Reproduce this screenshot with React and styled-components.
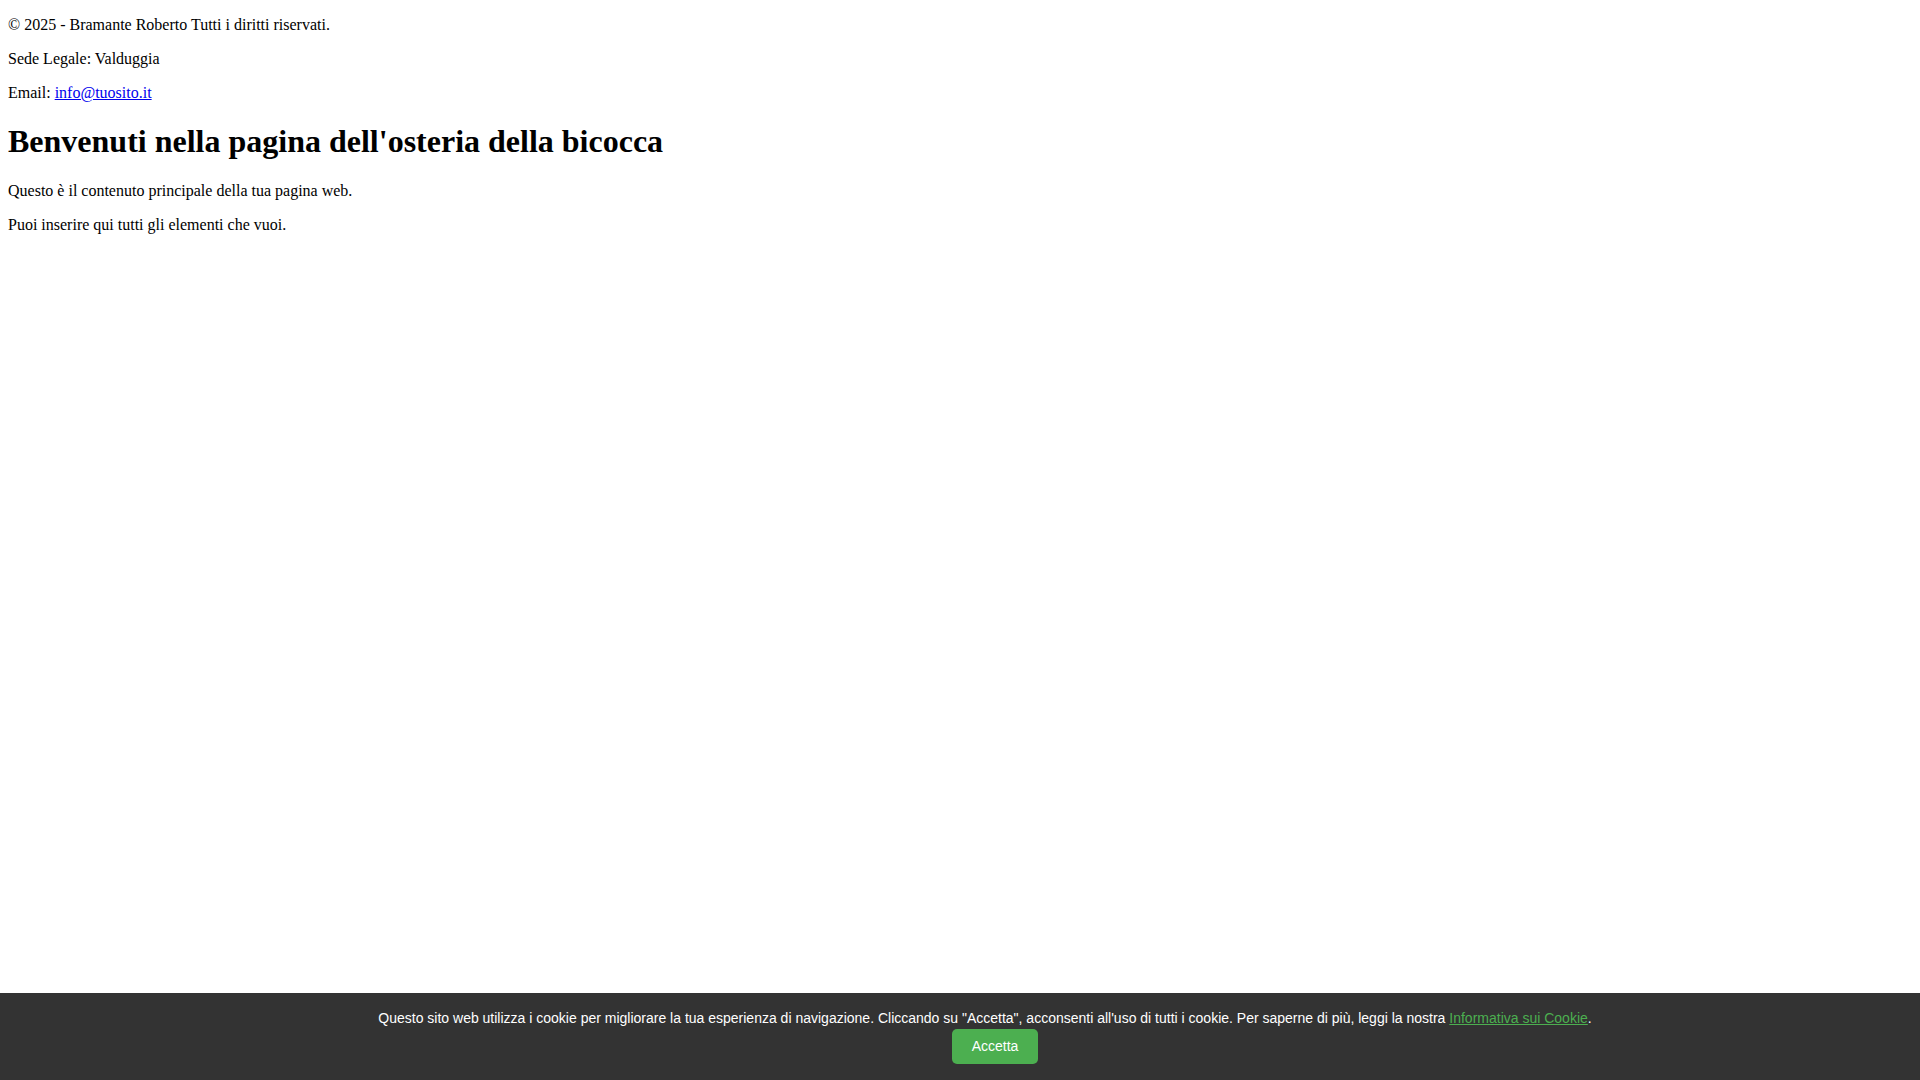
import React from "react"
import styled, { createGlobalStyle } from "styled-components"

const GlobalStyle = createGlobalStyle`
  html {
    background: #fff;
    overflow-x: hidden;
  }

  body {
    margin: 0 8px 8px;
    font-family: "Liberation Serif", "Times New Roman", serif;
    font-size: 16px;
    color: #000;
  }
`

const SiteFooter = styled.footer`
  display: block;
`

const Line = styled.p`
  margin: 16px 0;
  line-height: normal;
`

const MailLink = styled.a`
  color: #0000ee;
  text-decoration: underline;
`

const Main = styled.main`
  display: block;
`

const Title = styled.h1`
  font-size: 32px;
  font-weight: bold;
  margin: 21.44px 0;
`

const CookieBanner = styled.div`
  position: fixed;
  left: 0;
  bottom: 0;
  width: 100%;
  padding: 15px 25px 16px;
  background: #333;
  color: #fff;
  text-align: center;
  font-family: "Liberation Sans", Arial, sans-serif;
  font-size: 14px;
  line-height: 21px;
`

const CookieText = styled.p`
  margin: 0;
`

const PolicyLink = styled.a`
  color: #4caf50;
  text-decoration: underline;
`

const AcceptButton = styled.button`
  display: inline-block;
  margin-left: 20px;
  padding: 7px 20px;
  border: none;
  border-radius: 5px;
  background: #4caf50;
  color: #fff;
  font-family: inherit;
  font-size: 14px;
  line-height: 21px;
  cursor: pointer;
`

export default function App() {
  return (
    <>
      <GlobalStyle />
      <SiteFooter>
        <Line>© 2025 - Bramante Roberto Tutti i diritti riservati.</Line>
        <Line>Sede Legale: Valduggia</Line>
        <Line>
          Email: <MailLink href="#">info@tuosito.it</MailLink>
        </Line>
      </SiteFooter>
      <Main>
        <Title>Benvenuti nella pagina dell'osteria della bicocca</Title>
        <Line>Questo è il contenuto principale della tua pagina web.</Line>
        <Line>Puoi inserire qui tutti gli elementi che vuoi.</Line>
      </Main>
      <CookieBanner>
        <CookieText>
          Questo sito web utilizza i cookie per migliorare la tua esperienza di
          navigazione. Cliccando su "Accetta", acconsenti all'uso di tutti i
          cookie. Per saperne di più, leggi la nostra{" "}
          <PolicyLink href="#">Informativa sui Cookie</PolicyLink>.
        </CookieText>
        <AcceptButton>Accetta</AcceptButton>
      </CookieBanner>
    </>
  )
}
